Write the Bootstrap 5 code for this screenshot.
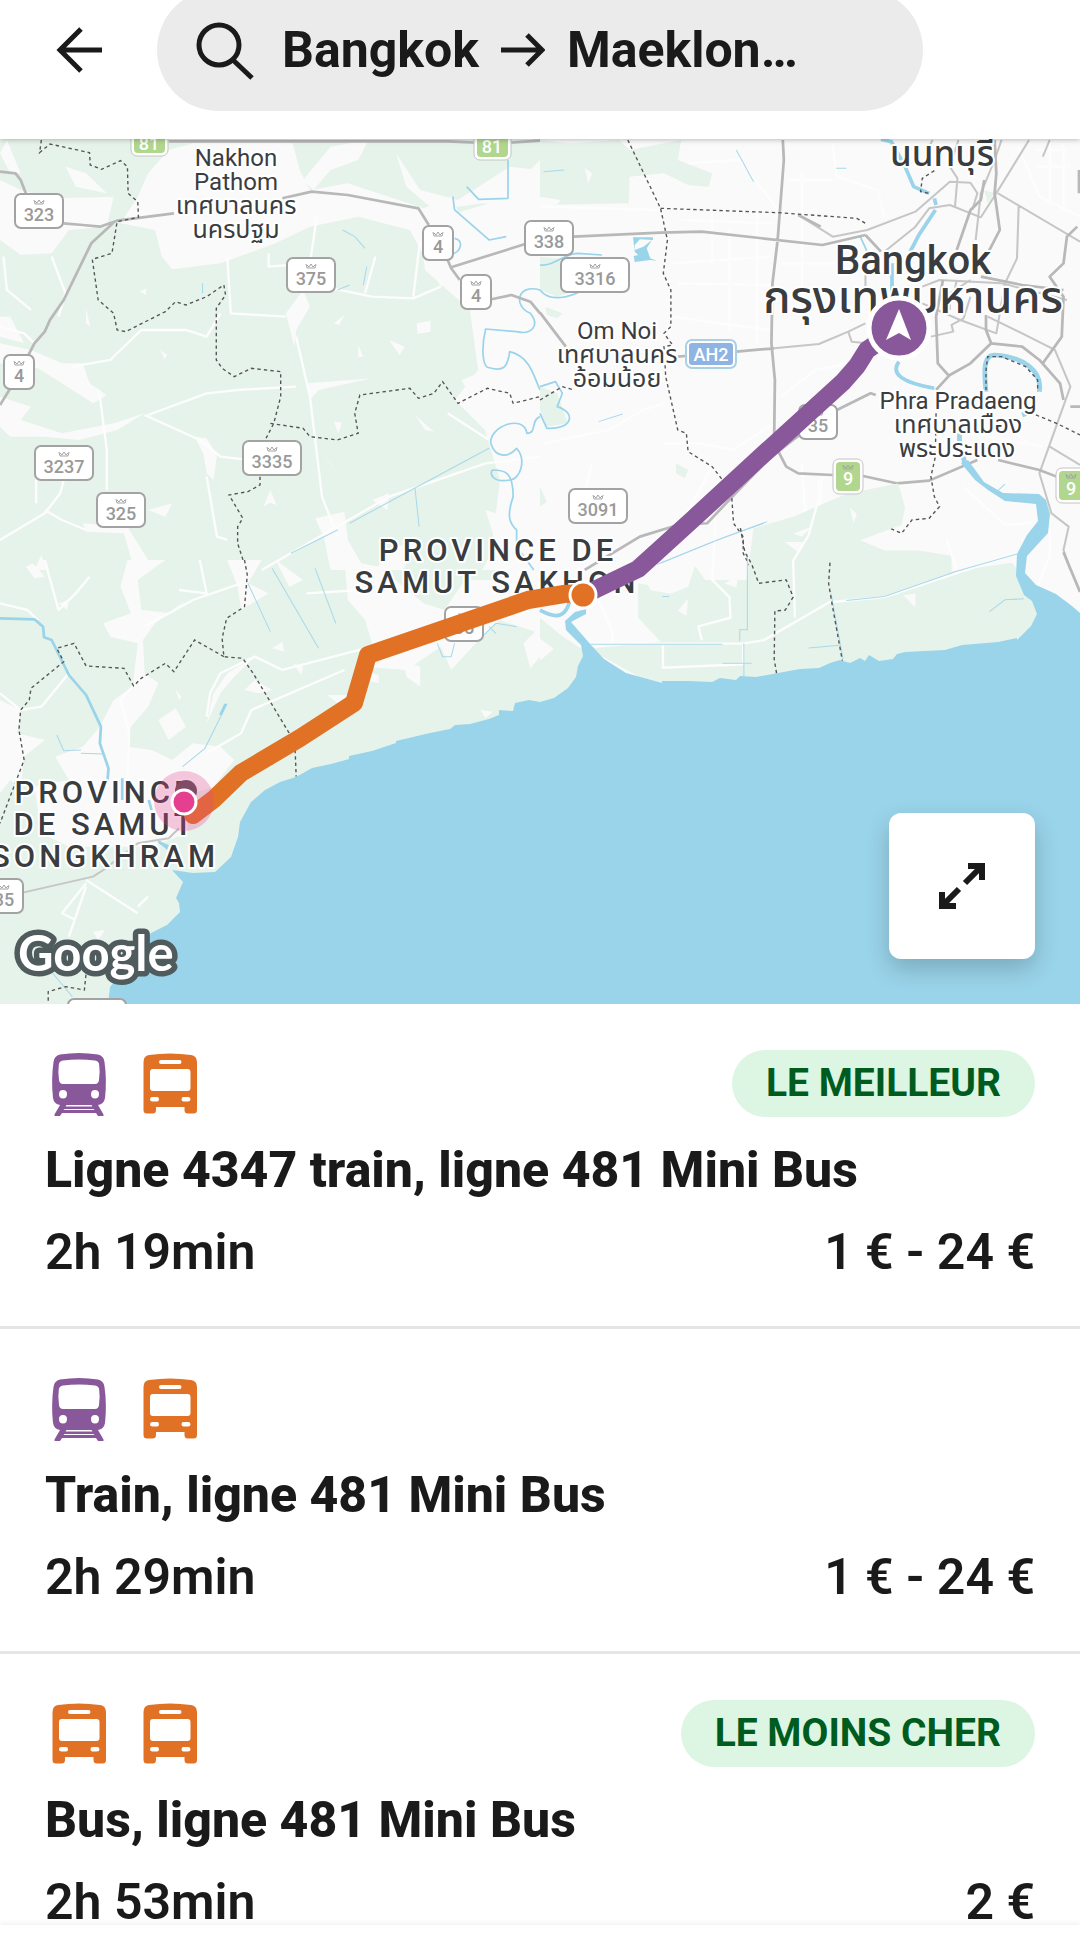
<!DOCTYPE html>
<html lang="fr">
<head>
<meta charset="utf-8">
<meta name="viewport" content="width=device-width, initial-scale=1">
<title>Bangkok → Maeklong</title>
<link href="https://cdn.jsdelivr.net/npm/bootstrap@5.3.0/dist/css/bootstrap.min.css" rel="stylesheet">
<style>
  body { font-family: Roboto, "Noto Sans", sans-serif; color: #1a1a1a; }
  .topbar { height: 139px; padding: 0 157px 28px 46px; box-shadow: 0 1px 5px rgba(0,0,0,.25); z-index: 2; }
  .back-btn { width: 66px; height: 122px; }
  .search-pill { height: 122px; margin-left: 45px; padding: 0 36px; background: #ebebeb; font-size: 50px; font-weight: 700; color: #1a1a1a; gap: 25px; }
  .search-pill:hover { background: #e4e4e4; }
  .trip-ends { gap: 22px; }
  .map-view svg.map-art { width: 100%; height: auto; }
  .expand-btn { right: 45px; bottom: 45px; width: 146px; height: 146px; border-radius: 12px; box-shadow: 0 10px 24px rgba(0,0,0,.2); }
  .route-list { scrollbar-width: none; }
  .route-list .route-item { padding: 46px 45px 41px; border: 0; border-bottom: 3px solid #e5e5e5; color: #1a1a1a; }
  .route-head { height: 67px; margin-bottom: 20px; }
  .route-modes { gap: 25px; }
  .route-tag { height: 67px; padding: 0 34px; font-size: 39px; font-weight: 700; line-height: 67px; background: #dcf6e3; color: #005c1e; }
  .route-title { font-size: 50px; font-weight: 800; line-height: 66px; margin-bottom: 16px; }
  .route-facts { font-size: 50px; font-weight: 600; line-height: 66px; }
  .bottom-edge { height: 19px; box-shadow: 0 -2px 5px rgba(0,0,0,.06); z-index: 2; }

  .land-green, .wood { fill: #e6f3ea; }
  .town { fill: #fafafa; }
  .sea { fill: #9ad4ea; }
  .river { fill: none; stroke: #9ad4ea; stroke-width: 8; stroke-linejoin: round; }
  .creek { fill: none; stroke: #a9d9ea; stroke-width: 3; }
  .lane { fill: none; stroke: #fcfdfc; stroke-width: 7; stroke-linejoin: round; }
  .road { fill: none; stroke: #b8b8b8; stroke-width: 8; stroke-linejoin: round; }
  .street { fill: none; stroke: #c6c6c6; stroke-width: 6; stroke-linejoin: round; }
  .border-line { fill: none; stroke: #555; stroke-width: 4; stroke-dasharray: 10 9; }
  .leg { fill: none; stroke-width: 18; stroke-linejoin: round; stroke-linecap: round; }
  .shield-box { fill: #fff; stroke: #a3a3a3; stroke-width: 2; }
  .shield-num { font: 500 18px Roboto, sans-serif; fill: #999; text-anchor: middle; }
  .shield-green .shield-num, .shield-blue .shield-num { fill: #fff; }
  .crown { fill: none; stroke: #a3a3a3; stroke-width: 1; }
  .shield-green .crown { stroke: #fff; }
  .place { font-family: Roboto, "Noto Sans Thai", "Noto Sans", sans-serif; fill: #3a3d40; stroke: #fff; stroke-width: 4; stroke-linejoin: round; paint-order: stroke; text-anchor: middle; }
  .place-town { font-size: 24px; }
  .place-town .th { font-size: 25px; }
  .place-city { font-size: 40px; font-weight: 500; }
  .place-thai { font-size: 45px; font-weight: 500; }
  .place-suburb { font-size: 35px; font-weight: 500; }
  .place-province { font-size: 31px; font-weight: 500; letter-spacing: 4px; }
  .map-credit { font: 700 49px Lato, sans-serif; fill: #fff; stroke: #4f5b5c; stroke-width: 11; stroke-linejoin: round; paint-order: stroke; }
</style>
</head>
<body class="bg-white">
<div class="d-flex flex-column vh-100 overflow-hidden">

  <header class="topbar d-flex align-items-end flex-shrink-0 position-relative bg-white overflow-visible">
    <button type="button" class="back-btn btn border-0 p-0 flex-shrink-0" aria-label="Retour">
      <svg width="66" height="66" viewBox="0 0 66 66" fill="none" stroke="#1a1a1a" stroke-width="5"><path d="M56 33H15M35 12L14 33L35 54"/></svg>
    </button>
    <button type="button" class="search-pill btn border-0 rounded-pill flex-grow-1 d-flex align-items-center text-nowrap">
      <svg width="64" height="64" viewBox="0 0 64 64" fill="none" stroke="#1a1a1a" stroke-width="5" class="flex-shrink-0"><circle cx="26" cy="27" r="20"/><path d="M40 42L59 60"/></svg>
      <span class="trip-ends d-flex align-items-center">
        <span>Bangkok</span>
        <svg width="44" height="34" viewBox="0 0 44 34" fill="none" stroke="#1a1a1a" stroke-width="5"><path d="M0 17H40M26 2L41 17L26 32"/></svg>
        <span>Maeklon…</span>
      </span>
    </button>
  </header>

  <section class="map-view position-relative flex-shrink-0">
    <svg class="map-art d-block" viewBox="0 139 1080 865" role="img" aria-label="Carte du trajet">
      <defs>
        <path id="crown" class="crown" d="M-5 0L-4 4H4L5 0M-4 1L-2 3L0 0L2 3L4 1"/>
        <g id="shield-1"><rect class="shield-box" x="-15" width="30" height="34" rx="6"/><use href="#crown" y="6"/></g>
        <g id="shield-2"><rect class="shield-box" x="-19" width="38" height="34" rx="6"/><use href="#crown" y="6"/></g>
        <g id="shield-3"><rect class="shield-box" x="-24" width="48" height="34" rx="6"/><use href="#crown" y="6"/></g>
        <g id="shield-4"><rect class="shield-box" x="-29" width="58" height="34" rx="6"/><use href="#crown" y="6"/></g>
      </defs>
      <rect y="130" width="1080" height="880" fill="#fafafa"/>
      <path class="land-green" d="M0 130H540V160L500 200L450 215L420 235L425 270L470 310L478 370L455 400L485 430L500 480L490 560L540 640L590 650V700L540 720L100 1010H0Z"/>

      <!-- north-west -->
      <g transform="translate(0 130) scale(.3444 .3333)">
        <path class="town" d="M430 130L490 60L560 40L850 40L870 120L900 180L1010 160L1230 235L1310 200L1350 290L1330 420L1280 470L1190 300L1040 260L900 290L800 340L640 400L500 418L470 380L450 300L350 280L400 200ZM0 150L60 180L160 205L330 200L310 290L200 300L150 370L60 375L0 330ZM190 110L250 130L310 190L220 170ZM880 150L960 50L1070 30L1040 90L960 120L910 180ZM1150 70L1220 180L1330 210L1480 110L1568 120V230L1400 220L1260 240L1180 170ZM0 640L90 660L180 700L240 700L260 760L310 795L270 820L180 760L110 715L0 700ZM0 800L90 830L60 870L180 910L330 880L420 850L340 900L230 930L130 920L30 920L0 890ZM830 550L880 480L900 530L860 600L855 650ZM0 560L30 560L70 640L0 620ZM20 30L60 130L30 130L0 70ZM250 535L262 590L250 580ZM405 485L425 475L424 495ZM465 660L485 675L478 688ZM970 580L1000 555L985 585ZM1210 580L1250 572L1250 605L1212 612ZM1040 645L1055 680L1040 680ZM1130 630L1175 650L1160 675ZM895 760L1080 745L925 780L900 810ZM565 920L600 925L630 975L620 1050L600 1030L590 970ZM920 945L980 1030L960 1000ZM1205 855L1260 905L1235 900ZM970 875L993 878L982 910ZM765 1130L785 1080L803 1125L785 1118ZM915 1165L1000 1145L1010 1230L1060 1320L960 1320L940 1220ZM1410 1140L1470 1160L1568 1210V1320H1400L1440 1240ZM1080 1110L1130 1090L1125 1140ZM1140 1250L1210 1240L1170 1320H1090ZM430 1140L500 1120L480 1160ZM240 1180L370 1190L430 1290L390 1320L360 1210L250 1205ZM100 1320L120 1275L135 1320ZM1370 800L1410 830L1420 900L1380 860ZM1340 750L1390 730L1400 750L1350 770ZM1380 240L1420 300L1370 280Z"/>
        <path class="lane" d="M285 780L290 800L310 960V1080M185 1050L175 1090L130 1150L0 1230M105 1030V1120M130 1140L180 1170L250 1200M660 380L670 550L830 560M430 855L600 790L690 780L860 770M640 550L600 620L540 600L410 600L320 690L210 710M0 590L70 610L100 640M420 855L580 930L640 980L720 990M860 620L900 800L935 1100L980 1220M600 1040L630 1220L660 1230M780 370V410L900 400L920 260M940 470L1080 500L1200 505L1280 470M1060 490L1090 380M1200 500L1220 330M760 1320L1130 1100L1410 1000L1568 980M1300 850L1420 930M150 380L190 490L170 560M10 380L20 480L90 540"/>
        <path class="creek" d="M995 300L1030 320L1060 355M1065 410L1055 465M980 480L1015 465M588 460V490M1015 1180L1140 1110L1420 955M1205 1075L1217 1190M845 1270L980 1200"/>
        <path class="river" style="stroke-width:5" d="M1475 90V205L1390 208L1355 170M1315 200L1320 240L1420 330L1470 320M1320 325C1350 330 1335 370 1315 370M1568 480C1500 460 1490 530 1540 550C1570 590 1540 615 1500 605L1410 597C1398 650 1400 700 1415 712C1470 730 1475 700 1480 665C1540 680 1550 740 1568 780M1568 860C1540 870 1560 910 1530 910C1520 850 1420 890 1425 940C1440 990 1480 980 1500 955C1530 990 1510 1050 1480 1050C1430 1060 1420 1030 1430 1020C1460 1020 1490 1020 1490 1100C1470 1160 1480 1180 1500 1200L1500 1250L1550 1320"/>
        <path class="road" d="M0 125L45 130L60 150L75 190M184 280L240 285L290 290L340 272L505 250M330 278L265 340L185 510L145 570L130 605L100 640L80 680M30 775L0 825M820 205L905 185L1010 195L1215 235L1245 285M1300 390L1310 415L1335 450M1310 412L1525 342M1427 508L1485 495L1540 515L1568 550M490 34H1300L1380 38M1484 38L1568 32"/>
        <path class="border-line" d="M120 30L115 68L145 42L260 68L262 105L295 118L350 92L370 110L372 190L400 215L402 262L340 275L325 370L268 388L285 510L330 550L340 600L365 605L480 545L510 515L540 525L600 500L650 465L655 495L628 535V690L645 715L680 740L730 715L815 725V800L795 880L770 930M755 1040V1065L720 1085L665 1095L705 1165L690 1190V1240L715 1320M785 880L880 895L900 920L980 930L1040 910L1030 850L1045 795L1190 775L1215 805L1260 790L1285 755L1330 820L1415 775L1480 790L1490 820L1568 800"/>
      </g>

      <!-- north-east -->
      <g transform="translate(540 130) scale(.3444 .3333)">
        <path class="wood" d="M0 30L90 40L230 30L260 60L410 30L400 90L500 130L490 170L430 165L360 130L260 140L258 220L0 225ZM0 380L90 390L110 480L50 500L0 480ZM15 530L65 550L50 565L20 555ZM0 1070L20 1115L0 1130ZM395 1000L430 1020L420 1045L395 1030ZM0 770L50 790L80 880L20 890L0 840ZM1290 180L1320 190L1300 220Z"/>
        <path class="town" d="M130 115L152 130L140 160ZM0 200L60 210L50 225H0Z"/>
        <path class="lane" d="M0 230L350 240M430 100L580 90L640 170L690 240M410 270L680 280M380 400L670 380M400 460L670 465M500 240V400M550 300V600M630 250V640M380 560L670 600M760 130V500M850 40L860 140L980 180L1000 260M720 150H850M700 400H930M720 540L930 530M10 940L200 900L300 840L360 820M360 940L470 940L560 960L680 880M110 1180L150 1000M400 1200L500 1010M760 1000L770 1150M820 1040L810 1140L730 1320M1390 50L1450 200L1568 260M1440 60L1530 60M1440 110L1540 110M1480 30V230M1520 40V240M700 800L800 720L900 700M1190 800L1300 850L1420 940M1190 900L1460 950"/>
        <path class="creek" d="M570 60L620 155M860 115H890M170 875L240 852M350 1300L540 1220L650 1180M540 1220L660 1175M10 125L70 120"/>
        <path class="river" style="stroke-width:5" d="M0 405C40 410 70 370 110 370L180 375M0 480C30 520 90 500 125 480M0 770L45 755L65 790L50 830C110 850 90 900 20 895L0 850M930 320L950 365"/>
        <path class="sea" d="M270 322H328V330L290 328L275 345V360L300 350L325 330L310 355L320 385L340 392L320 390L275 396L272 378L285 375L275 365Z"/>
        <path class="river" style="stroke-width:11" d="M990 28L1020 35L1060 110L1085 170L1130 190M1145 205L1150 225M1148 240L1100 315L1075 365M1022 400V485M1042 695C1015 735 1060 760 1145 775"/>
        <path class="river" style="stroke-width:14" d="M1295 785C1290 730 1285 675 1320 675C1400 680 1460 720 1450 785M1400 855L1425 845M1218 910V940M1228 975L1235 1010"/>
        <path class="street" d="M750 255L850 320L950 300L1090 245L1190 155L1250 158L1270 190L1255 240M1000 365L1090 290L1130 235L1190 225L1280 262L1325 190L1420 30M1330 190L1568 335M1390 225L1385 385L1350 460L1325 610L1220 570L1110 520M1140 30L1120 70M1215 30L1190 110L1212 145L1205 230M1340 30L1320 90L1280 190L1265 330M1300 560L1400 610L1495 660L1540 770L1450 1030L1485 1150L1535 1190L1520 1260L1540 1320M1110 470L1160 450L1340 460L1530 510M1210 450L1200 500M945 430V480M895 605L905 635L950 640M895 605L945 580M1135 620L1200 605L1195 585L1230 565L1250 500M1480 30L1460 80M1480 950L1568 1005M680 655L810 642L895 605M1190 540V490L1250 450"/>
        <path class="road" d="M705 30L708 90L690 330L675 460L672 640L682 750L680 920L695 970L715 1010L750 1030L850 1035M938 1038L1035 1060L1130 1052L1270 990M1330 990L1450 1020L1500 1040M0 548L75 650M98 320L350 308L470 305L820 345L945 315M400 680L422 678M570 665L680 655M130 1320L290 1220L400 1185L485 1180L660 990L760 910M862 840L960 790L975 795M750 255L815 290M945 315L990 365M1320 30L1325 130L1320 190L1335 300L1300 370M1290 150L1280 210L1250 240L1210 360M1170 450L1150 560L1155 700L1185 735M1150 780L1190 735L1250 700L1310 640L1400 650L1450 690L1510 760L1520 810M1295 555V600L1310 640M1560 290L1530 320L1520 400L1480 440L1520 500L1515 620L1460 700M1280 440L1400 465L1520 480M1540 830H1568M1565 120V190"/>
        <path class="border-line" d="M255 30L350 235L370 330L358 430L380 480V590L360 610L385 645L360 650L365 740L400 900L425 910L430 965L500 1010L530 1050M557 1105L562 1180L590 1220V1270L615 1320M350 235L690 248L920 265L945 280M1145 122L1110 145L1105 185L1130 190M0 810L65 770L100 780M1440 855L1500 880L1568 915M1150 850L1148 980L1135 1040L1145 1100L1160 1130L1130 1165L1080 1170L1050 1210L1005 1190L985 1140L955 1180L925 1130L880 1130L850 1200L845 1320M1295 780V720L1300 680L1340 680L1410 710L1445 750V785"/>
      </g>

      <!-- south-west -->
      <g transform="translate(0 560) scale(.3444 .3333)">
        <path class="town" d="M370 0L480 0L400 60L410 150L500 160L540 120L450 190L415 240L420 340L460 370L430 440L380 500L370 560L440 570L500 600L560 550L640 560L680 600L620 680L560 700L540 820L440 860L200 860L120 820L100 680L200 660L160 590L240 560L290 500L330 420L385 380L400 250L320 230L300 190L380 160L350 80ZM0 420L60 450L50 520L130 540L70 590L60 690L30 660L0 700ZM620 400L660 340L740 290L680 350L640 400L600 490ZM460 480L510 445L540 500L490 540ZM660 0L760 0L720 70L780 100L700 150L690 80ZM1000 0L1100 20L1230 130L1290 150L1350 60H1568V220L1450 180L1390 240L1310 330L1280 260L1180 330L1060 320L1080 250L1060 180L1010 120ZM1120 150L1180 150L1140 240ZM850 310L880 320L875 345ZM790 265L820 245L825 275ZM710 390L740 360L790 390L750 400ZM800 0L880 60L840 80ZM170 130L200 120L195 150ZM75 20L95 10L130 50L100 55ZM950 405L1010 405L980 430ZM510 390L527 410L520 420ZM270 1115L305 1110L285 1140ZM1080 340L1100 345L1100 370L1060 360ZM1520 250L1568 200V290L1540 325ZM1170 300L1220 320L1220 380L1180 350ZM1395 450L1430 455L1410 475Z"/>
        <path class="lane" d="M410 350L350 420L375 520L370 660M600 470L610 400L640 340L740 290L820 330L1060 265M600 580L700 520L730 450L1000 330M420 200L560 120L700 70M0 400L60 450L120 440L200 340M250 960L400 1060M250 970L180 1060L220 1080M250 980L200 1130M400 1040L430 1010M580 0L600 100L520 90M130 0L170 150L220 100L260 50M890 100L1050 90M0 130L80 150L110 180"/>
        <path class="creek" d="M790 25L925 265M915 25L975 190M720 70L785 215M165 525L185 572L235 570M235 580L300 582M660 430L595 565L530 620M1270 250L1285 290L1310 290L1320 250M1400 230L1440 190L1500 200M1420 200L1440 220M145 1230L210 1310"/>
        <path class="river" d="M0 175L100 178L125 200L128 232L150 240L200 345L250 405L293 500L290 550L315 625L312 665M355 655V720M432 720L440 750M460 845L485 862M655 432L640 465"/>
        <path class="sea" d="M455 840L490 855L485 870Z"/>
        <path class="street" d="M66 998L270 950L300 930L400 850L490 835L520 805"/>
        <path class="border-line" d="M710 0L718 45L710 140L658 175L645 235L650 290L705 295L735 340L840 520M857 570L860 650M650 290L565 240L505 335L480 310L410 355L388 378L360 325L250 318L215 250L165 265L185 305L90 385L85 420L60 450L55 510L70 600L0 790M320 1225L250 1240L245 1290L190 1280L140 1295V1330"/>
      </g>

      <!-- south-east -->
      <g transform="translate(540 480) scale(.3444)">
        <path class="wood" d="M620 140L740 105L890 40L1040 10L1060 80L1050 130L930 175L1000 205L1100 205L1195 220L1195 265L1370 240L1450 330V460L700 600H340L140 490L350 470L285 400V300L340 310L450 250L480 290L600 290ZM0 400L60 450L120 490L110 600L0 660Z"/>
        <path class="town" d="M300 270L450 250L430 310L380 330L320 320ZM710 180L770 180L750 210ZM735 155L790 135L760 165ZM1055 335L1090 330V370ZM400 380L430 345L425 395ZM900 80L920 100L910 125ZM535 300L575 280L570 312ZM0 460L40 490L0 525Z"/>
        <path class="lane" d="M510 120L500 290L550 340L553 400L460 425L470 465M140 475H590L650 465L840 355L1000 340L1210 270L1380 215M357 480V545L590 535V480M740 400L735 235L780 160L810 50V0M1180 170L1210 260M1230 20L1350 130L1430 125M170 350L210 440V470M1480 100V220L1440 320"/>
        <path class="creek" d="M340 245L500 180L650 125M602 215V435H580V468M592 475V570M145 477H530M890 350L1000 338L1210 265L1385 215M845 330L880 520M1305 382L1350 348L1405 345M355 338H375M530 532H615M780 488L870 480M1325 35L1350 12"/>
        <path class="river" style="stroke-width:11" d="M0 378C40 400 80 410 90 330"/>
        <path class="road" d="M1520 210L1568 325"/>
        <path class="border-line" d="M582 140L595 210L615 245L635 300L715 290L735 340L712 378L682 380L680 520L687 562M842 240L838 300L848 360L878 525"/>
      </g>

      <path class="sea" d="M108 1004L110 987L131 960L151 933L167 925L172 920L180 912L179 903L176 898L183 882L172 870L193 873L215 872L231 857L238 837L240 822L251 802L265 790L280 782L296 777L312 768L331 764L349 759V756L372 751L396 743V741L430 733L450 729L455 725L470 724L489 719L499 715V710L513 711L515 703L529 700L540 702L554 698L568 688L576 677L578 666L583 656L581 645L566 630L565 621L575 612L586 609V614L571 622L591 645L604 659L626 673L662 683V681L688 681L712 682L720 678L736 680L740 676L756 677L778 673L800 669L819 668L830 663L840 660L850 663L860 658L865 661L869 655L879 661L893 659L897 654L905 652L925 651L945 650L962 645L998 642L1017 638V640L1031 626L1037 614L1032 601L1024 595L1016 576L1017 554L1027 535L1038 521L1036 504L1005 501L988 490L975 480L961 463L968 460L984 482L1003 493L1039 494L1046 500L1050 514L1048 533L1027 556L1025 573L1036 585L1056 594L1072 606L1080 613V1004Z"/>

      <!-- road numbers -->
      <g>
        <use href="#shield-3" x="39" y="194"/><text class="shield-num" x="39" y="221">323</text>
        <use href="#shield-1" x="438" y="226"/><text class="shield-num" x="438" y="253">4</text>
        <use href="#shield-1" x="476" y="275"/><text class="shield-num" x="476" y="302">4</text>
        <use href="#shield-1" x="19" y="355"/><text class="shield-num" x="19" y="382">4</text>
        <use href="#shield-3" x="311" y="258"/><text class="shield-num" x="311" y="285">375</text>
        <use href="#shield-4" x="64" y="446"/><text class="shield-num" x="64" y="473">3237</text>
        <use href="#shield-4" x="272" y="441"/><text class="shield-num" x="272" y="468">3335</text>
        <use href="#shield-3" x="121" y="493"/><text class="shield-num" x="121" y="520">325</text>
        <use href="#shield-3" x="549" y="221"/><text class="shield-num" x="549" y="248">338</text>
        <rect class="shield-box" x="561" y="258" width="68" height="34" rx="6"/><use href="#crown" x="595" y="264"/><text class="shield-num" x="595" y="285">3316</text>
        <use href="#shield-4" x="598" y="489"/><text class="shield-num" x="598" y="516">3091</text>
        <use href="#shield-2" x="818" y="405"/><text class="shield-num" x="818" y="432">35</text>
        <use href="#shield-2" x="464" y="607"/><text class="shield-num" x="464" y="634">35</text>
        <use href="#shield-2" x="4" y="879"/><text class="shield-num" x="4" y="906">35</text>
        <use href="#shield-4" x="97" y="999"/>
      </g>
      <g class="shield-green" fill="#b1d78e">
        <g stroke="#c4c4c4"><rect x="131" y="120" width="37" height="36" rx="6" fill="#fff"/><rect x="474" y="124" width="37" height="36" rx="6" fill="#fff"/><rect x="833" y="459" width="30" height="35" rx="6" fill="#fff"/><rect x="1056" y="468" width="30" height="35" rx="6" fill="#fff"/></g>
        <rect x="134" y="123" width="31" height="30" rx="4"/><text class="shield-num" x="149" y="150">81</text>
        <rect x="477" y="127" width="31" height="30" rx="4"/><text class="shield-num" x="492" y="153">81</text>
        <rect x="836" y="462" width="24" height="29" rx="4"/><use href="#crown" x="848" y="465"/><text class="shield-num" x="848" y="485">9</text>
        <rect x="1059" y="471" width="24" height="29" rx="4"/><use href="#crown" x="1071" y="474"/><text class="shield-num" x="1071" y="495">9</text>
      </g>
      <g class="shield-blue">
        <rect x="686" y="340" width="50" height="28" rx="6" fill="#fff" stroke="#a9d0e4" stroke-width="2"/><rect x="689" y="343" width="44" height="22" rx="3" fill="#8fb4e3"/><text class="shield-num" x="711" y="361">AH2</text>
      </g>

      <!-- place names -->
      <g class="place">
        <g class="place-town">
          <text x="236" y="166">Nakhon</text><text x="236" y="190">Pathom</text><text class="th" x="236" y="214">เทศบาลนคร</text><text class="th" x="236" y="238">นครปฐม</text>
          <text x="617" y="339">Om Noi</text><text class="th" x="617" y="363">เทศบาลนคร</text><text class="th" x="617" y="387">อ้อมน้อย</text>
          <text x="958" y="409">Phra Pradaeng</text><text class="th" x="958" y="433">เทศบาลเมือง</text><text class="th" x="957" y="457">พระประแดง</text>
        </g>
        <text class="place-suburb" x="942" y="166">นนทบุรี</text>
        <text class="place-thai" x="913" y="313">กรุงเทพมหานคร</text>
        <text class="place-city" x="913" y="274">Bangkok</text>
        <g class="place-province">
          <text x="498" y="561">PROVINCE DE</text><text x="497" y="593">SAMUT SAKHON</text>
          <text x="105" y="803">PROVINCE</text><text x="105" y="835">DE SAMUT</text><text x="105" y="867">SONGKHRAM</text>
        </g>
      </g>

      <!-- trip -->
      <path class="leg" stroke="#89589b" d="M899 328L867 350L857 366L843 382L767 451L692 520L638 569L586 594"/>
      <path class="leg" stroke="#e17225" d="M583 593L564 594L528 600L368 655L354 703L300 738L241 773L214 799L193 815"/>
      <circle cx="583" cy="595" r="13" fill="#e17225" stroke="#fff" stroke-width="3"/>
      <circle cx="899" cy="328" r="30" fill="#89589b" stroke="#fff" stroke-width="5"/>
      <path fill="#fff" d="M899 309L911 340L899 333L886 340Z"/>
      <circle cx="186" cy="791" r="11" fill="#595058"/>
      <circle cx="184" cy="801" r="30" fill="#e5408f" fill-opacity=".28"/>
      <circle cx="184" cy="802" r="12" fill="#e5408f" stroke="#fff" stroke-width="3"/>
      <text class="map-credit" x="18" y="971">Google</text>
    </svg>
    <button type="button" class="expand-btn btn btn-light bg-white border-0 position-absolute d-flex align-items-center justify-content-center p-0" aria-label="Agrandir la carte">
      <svg width="46" height="46" viewBox="0 0 46 46" fill="none" stroke="#1a1a1a" stroke-width="6"><path d="M29 3H43V17M43 3L26 20M3 29V43H17M3 43L20 26"/></svg>
    </button>
  </section>

  <svg class="d-none">
    <symbol id="ic-train" viewBox="-1 0 66 66"><path fill="#89589b" fill-rule="evenodd" d="M14 3.500Q33 .5 52 3.500Q58 5 58.500 11Q61 29 59 47Q58 53 52 54L57.500 63.500V65H52L50 62H16L14 65H8.500V63.500L14 54Q8 53 7 47Q5 29 7.500 11Q8 5 14 3.500ZM17 9.500Q13 10 12.800 14Q11.800 21 13 29Q13.500 33 17 33H49Q52.500 33 53 29Q54.200 21 53.200 14Q53 10 49 9.500Q33 7.500 17 9.500ZM17 39A4 4.200 0 1 0 17 47.400A4 4.200 0 1 0 17 39ZM49 39A4 4.200 0 1 0 49 47.400A4 4.200 0 1 0 49 39ZM20.500 54L19.500 55.500H46.500L45.500 54ZM18.500 58L17.500 59H48.500L47.500 58Z"/></symbol>
    <symbol id="ic-bus" viewBox="-1 0 66 66"><path fill="#e17225" fill-rule="evenodd" d="M12 4Q33 1 54 4Q60 5 60 11V59Q60 62.500 56.500 62.500H51Q47.500 62.500 47.500 59V56H19V59Q19 62.500 15.500 62.500H10Q6.500 62.500 6.500 59V11Q6.500 5 12 4ZM24 9Q22 9 22 11Q22 13 24 13H42.500Q44.500 13 44.500 11Q44.500 9 42.500 9ZM16 18Q13 18 13 21V37Q13 40 16 40H50.500Q53.500 40 53.500 37V21Q53.500 18 50.500 18ZM15.500 46Q13 46 13 48.300Q13 50.600 15.500 50.600H20Q22 50.600 22 48.300Q22 46 20 46ZM46.500 46Q44.500 46 44.500 48.300Q44.500 50.600 46.500 50.600H51Q53.500 50.600 53.500 48.300Q53.500 46 51 46Z"/></symbol>
  </svg>

  <main class="route-list list-group list-group-flush flex-grow-1 overflow-auto">
    <a href="#trajet-1" class="route-item list-group-item list-group-item-action flex-shrink-0">
      <div class="route-head d-flex justify-content-between align-items-center">
        <span class="route-modes d-flex"><svg width="66" height="66"><use href="#ic-train"/></svg><svg width="66" height="66"><use href="#ic-bus"/></svg></span>
        <span class="route-tag rounded-pill">LE MEILLEUR</span>
      </div>
      <h2 class="route-title">Ligne 4347 train, ligne 481 Mini Bus</h2>
      <div class="route-facts d-flex justify-content-between"><span>2h 19min</span><span>1 € - 24 €</span></div>
    </a>
    <a href="#trajet-2" class="route-item list-group-item list-group-item-action flex-shrink-0">
      <div class="route-head d-flex justify-content-between align-items-center">
        <span class="route-modes d-flex"><svg width="66" height="66"><use href="#ic-train"/></svg><svg width="66" height="66"><use href="#ic-bus"/></svg></span>
      </div>
      <h2 class="route-title">Train, ligne 481 Mini Bus</h2>
      <div class="route-facts d-flex justify-content-between"><span>2h 29min</span><span>1 € - 24 €</span></div>
    </a>
    <a href="#trajet-3" class="route-item list-group-item list-group-item-action flex-shrink-0">
      <div class="route-head d-flex justify-content-between align-items-center">
        <span class="route-modes d-flex"><svg width="66" height="66"><use href="#ic-bus"/></svg><svg width="66" height="66"><use href="#ic-bus"/></svg></span>
        <span class="route-tag rounded-pill">LE MOINS CHER</span>
      </div>
      <h2 class="route-title">Bus, ligne 481 Mini Bus</h2>
      <div class="route-facts d-flex justify-content-between"><span>2h 53min</span><span>2 €</span></div>
    </a>
  </main>
  <div class="bottom-edge flex-shrink-0 bg-white position-relative"></div>
</div>
<script src="https://cdn.jsdelivr.net/npm/bootstrap@5.3.0/dist/js/bootstrap.bundle.min.js"></script>
</body>
</html>
